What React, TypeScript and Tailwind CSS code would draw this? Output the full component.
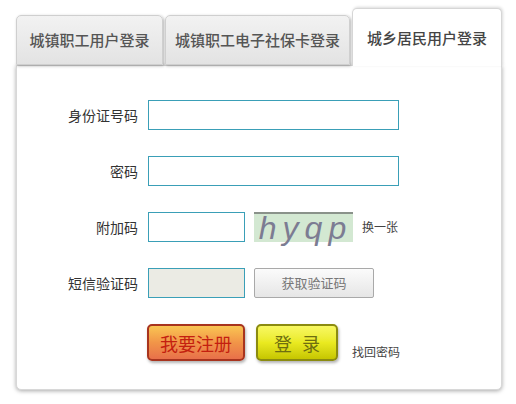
const font = { fontFamily: '"Noto Sans CJK SC", "Liberation Sans", sans-serif' };

function Field({ label, children }: { label: string; children: React.ReactNode }) {
  return (
    <div className="flex items-center h-[30px]">
      <div className="w-[121px] text-right text-[14px] text-[#333]">{label}</div>
      <div className="ml-[10px] flex items-center">{children}</div>
    </div>
  );
}

export default function App() {
  return (
    <div className="w-[516px] h-[404px] bg-white pt-[8px] pl-[16px]" style={font}>
      {/* tabs */}
      <div className="flex items-end gap-[2px] h-[57px]">
        <div className="w-[147px] h-[50px] flex items-center justify-center text-[15px] font-medium text-[#555] rounded-t-[5px] border border-[#cfcfcf] bg-gradient-to-b from-[#f2f2f2] to-[#e3e3e3] shadow-[1px_1px_3px_rgba(0,0,0,0.3)]">
          城镇职工用户登录
        </div>
        <div className="w-[185px] h-[50px] flex items-center justify-center text-[15px] font-medium text-[#555] rounded-t-[5px] border border-[#cfcfcf] bg-gradient-to-b from-[#f2f2f2] to-[#e3e3e3] shadow-[1px_1px_3px_rgba(0,0,0,0.3)]">
          城镇职工电子社保卡登录
        </div>
        <div className="relative z-10 w-[150px] h-[58px] -mb-px flex items-center justify-center text-[15px] font-medium text-[#444] rounded-t-[5px] border border-b-0 border-[#d6d6d6] bg-white shadow-[1px_-1px_3px_rgba(0,0,0,0.15)] pt-[2px]">
          城乡居民用户登录
        </div>
      </div>

      {/* panel */}
      <div className="w-[486px] h-[325px] bg-white border border-[#d8d8d8] rounded-b-[5px] shadow-[0_1px_4px_rgba(0,0,0,0.35)] pt-[34px] flex flex-col gap-[26px]">
        <Field label="身份证号码">
          <input className="w-[251px] h-[30px] border border-[#3a9fb7] bg-white outline-none" />
        </Field>
        <Field label="密码">
          <input type="password" className="w-[251px] h-[30px] border border-[#3a9fb7] bg-white outline-none" />
        </Field>
        <Field label="附加码">
          <input className="w-[97px] h-[30px] border border-[#3a9fb7] bg-white outline-none" />
          <div
            className="ml-[9px] w-[99px] h-[30px] bg-[#d3e8d2] border-t-2 border-[#8a928a] flex items-center justify-center text-[32px] italic text-[#7c7c92] tracking-[6px] pl-[4px] leading-none"
            style={{ fontFamily: '"Liberation Sans", sans-serif' }}
          >
            hyqp
          </div>
          <span className="ml-[9px] text-[12px] text-[#444]">换一张</span>
        </Field>
        <Field label="短信验证码">
          <input disabled className="w-[97px] h-[30px] border border-[#3a9fb7] bg-[#ebebe4] outline-none" />
          <button className="ml-[9px] w-[120px] h-[30px] border border-[#a9a9a9] rounded-[2px] bg-gradient-to-b from-[#fbfbfb] to-[#e6e6e6] text-[13px] text-[#777]">
            获取验证码
          </button>
        </Field>
        <div className="flex items-end ml-[130px]">
          <button className="w-[98px] h-[37px] rounded-[5px] border-2 border-[#a8341e] bg-gradient-to-b from-[#f9c553] via-[#f19548] to-[#e8704a] text-[18px] text-[#c41f10] shadow-[1px_2px_3px_rgba(0,0,0,0.3)] leading-none">
            我要注册
          </button>
          <button className="ml-[11px] w-[82px] h-[37px] rounded-[5px] border-2 border-[#8b8b10] bg-gradient-to-b from-[#f8f860] via-[#eaea20] to-[#c6c600] text-[18px] text-[#6e6e10] shadow-[1px_2px_3px_rgba(0,0,0,0.3)] leading-none tracking-[10px] pl-[10px]">
            登录
          </button>
          <span className="ml-[14px] text-[12px] text-[#444]">找回密码</span>
        </div>
      </div>
    </div>
  );
}
